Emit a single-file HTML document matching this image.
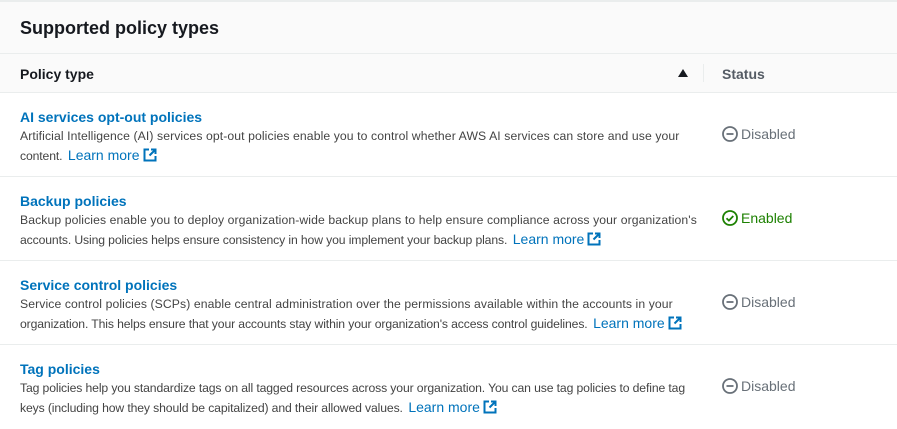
<!DOCTYPE html>
<html><head><style>
*{margin:0;padding:0;box-sizing:border-box}
body{width:897px;height:427px;background:#fff;font-family:"Liberation Sans",sans-serif;overflow:hidden;position:relative;color:#16191f}
.hdr{position:absolute;left:0;top:0;width:897px;height:54px;background:#fafafa;border-top:2px solid #eaeded;border-bottom:1px solid #eaeded}
.hdr h2{position:absolute;left:20px;top:16px;font-size:18px;font-weight:bold;color:#16191f}
.th{position:absolute;left:0;top:54px;width:897px;height:39px;background:#fafafa;border-bottom:1px solid #eaeded;font-size:14px;font-weight:bold}
.th .a{position:absolute;left:20px;top:12px}
.th .s{position:absolute;left:722px;top:12px;color:#545b64}
.th .tri{position:absolute;left:678px;top:15px;width:0;height:0;border-left:5px solid transparent;border-right:5px solid transparent;border-bottom:8px solid #16191f}
.th .div{position:absolute;left:703px;top:10px;width:1px;height:18px;background:#eaeded}
.row{position:absolute;left:0;width:897px;height:84px;border-bottom:1px solid #eaeded}
.t{position:absolute;left:20px;top:16px;font-size:14px;font-weight:bold;color:#0073bb}
.d{position:absolute;left:20px;top:33px;font-size:12.2px;letter-spacing:0.1px;line-height:20px;color:#444;white-space:nowrap}
.l2{letter-spacing:-0.12px}
.lm{color:#0073bb;font-size:14px;margin-left:2px;line-height:1;letter-spacing:0}
.lm svg{vertical-align:-2px;margin-left:3px}
.st{position:absolute;left:722px;top:33px;font-size:14px;color:#687078}
.st svg{vertical-align:-3px;margin-right:3px}
.en{color:#1d8102}
</style></head><body>
<div class="hdr"><h2>Supported policy types</h2></div>
<div class="th"><span class="a">Policy type</span><span class="tri"></span><span class="div"></span><span class="s">Status</span></div>

<div class="row" style="top:93px">
<div class="t">AI services opt-out policies</div>
<div class="d">Artificial Intelligence (AI) services opt-out policies enable you to control whether AWS AI services can store and use your<br><span class="l2">content.</span> <span class="lm">Learn more<svg width="14" height="14" viewBox="0 0 14 14"><path d="M6 1.5H1.5v11h11V8M8 1.5h4.5V6M12.5 1.5L6.5 7.5" stroke="#0073bb" stroke-width="2" fill="none"/></svg></span></div>
<div class="st"><svg width="16" height="16" viewBox="0 0 16 16"><circle cx="8" cy="8" r="7" stroke="#687078" stroke-width="1.8" fill="none"/><path d="M4.5 8h7" stroke="#687078" stroke-width="1.8"/></svg>Disabled</div>
</div>

<div class="row" style="top:177px">
<div class="t">Backup policies</div>
<div class="d">Backup policies enable you to deploy organization-wide backup plans to help ensure compliance across your organization's<br><span class="l2">accounts. Using policies helps ensure consistency in how you implement your backup plans.</span> <span class="lm">Learn more<svg width="14" height="14" viewBox="0 0 14 14"><path d="M6 1.5H1.5v11h11V8M8 1.5h4.5V6M12.5 1.5L6.5 7.5" stroke="#0073bb" stroke-width="2" fill="none"/></svg></span></div>
<div class="st en"><svg width="16" height="16" viewBox="0 0 16 16"><circle cx="8" cy="8" r="7" stroke="#1d8102" stroke-width="1.8" fill="none"/><path d="M4.5 8.2l2.4 2.4 4.4-4.6" stroke="#1d8102" stroke-width="1.8" fill="none"/></svg>Enabled</div>
</div>

<div class="row" style="top:261px">
<div class="t">Service control policies</div>
<div class="d">Service control policies (SCPs) enable central administration over the permissions available within the accounts in your<br><span class="l2">organization. This helps ensure that your accounts stay within your organization's access control guidelines.</span> <span class="lm">Learn more<svg width="14" height="14" viewBox="0 0 14 14"><path d="M6 1.5H1.5v11h11V8M8 1.5h4.5V6M12.5 1.5L6.5 7.5" stroke="#0073bb" stroke-width="2" fill="none"/></svg></span></div>
<div class="st"><svg width="16" height="16" viewBox="0 0 16 16"><circle cx="8" cy="8" r="7" stroke="#687078" stroke-width="1.8" fill="none"/><path d="M4.5 8h7" stroke="#687078" stroke-width="1.8"/></svg>Disabled</div>
</div>

<div class="row" style="top:345px;border-bottom:none">
<div class="t">Tag policies</div>
<div class="d"><span style="letter-spacing:-0.12px">Tag policies help you standardize tags on all tagged resources across your organization. You can use tag policies to define tag</span><br><span class="l2">keys (including how they should be capitalized) and their allowed values.</span> <span class="lm">Learn more<svg width="14" height="14" viewBox="0 0 14 14"><path d="M6 1.5H1.5v11h11V8M8 1.5h4.5V6M12.5 1.5L6.5 7.5" stroke="#0073bb" stroke-width="2" fill="none"/></svg></span></div>
<div class="st"><svg width="16" height="16" viewBox="0 0 16 16"><circle cx="8" cy="8" r="7" stroke="#687078" stroke-width="1.8" fill="none"/><path d="M4.5 8h7" stroke="#687078" stroke-width="1.8"/></svg>Disabled</div>
</div>
</body></html>
